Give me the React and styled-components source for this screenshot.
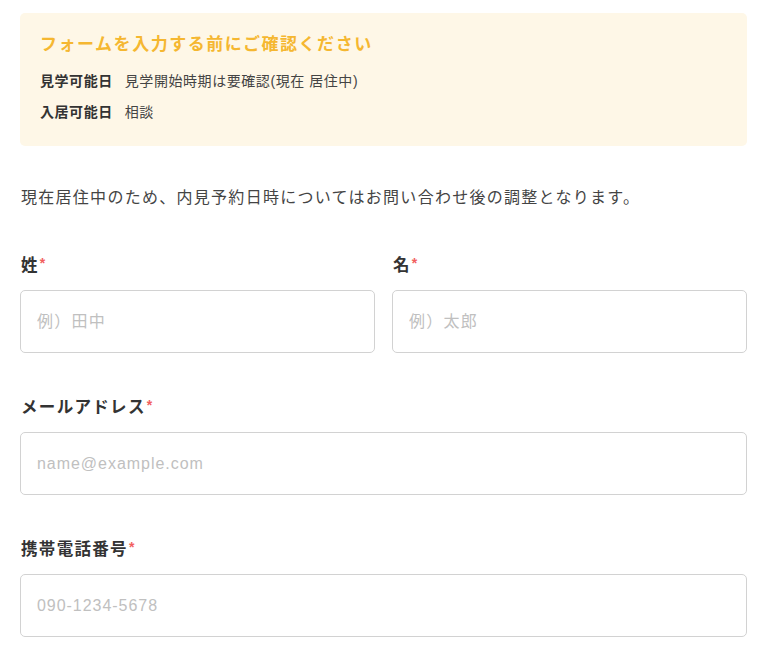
import React from 'react';
import styled, { createGlobalStyle } from 'styled-components';

const GlobalStyle = createGlobalStyle`
  body {
    margin: 0;
    background: #fff;
    font-family: "Liberation Sans", "Noto Sans CJK JP", sans-serif;
    color: #333;
  }
`;

const Page = styled.div`
  width: 727px;
  padding: 13px 0 0 20px;
`;

const Notice = styled.section`
  background: #fef7e7;
  border-radius: 5px;
  padding: 20px 20px 18px;
`;

const NoticeTitle = styled.h2`
  margin: 0 0 9px;
  font-size: 17px;
  line-height: 24px;
  font-weight: 700;
  letter-spacing: 0.09em;
  color: #f5b731;
`;

const NoticeRow = styled.div`
  display: flex;
  gap: 12px;
  font-size: 14px;
  line-height: 31px;
  letter-spacing: 0.04em;
  color: #444;
`;

const NoticeLabel = styled.span`
  font-weight: 700;
  color: #333;
`;

const Lead = styled.p`
  margin: 40px 0 41px 1px;
  font-size: 16px;
  line-height: 24px;
  letter-spacing: 0.08em;
  color: #444;
`;

const Row = styled.div`
  display: grid;
  grid-template-columns: 1fr 1fr;
  gap: 17px;
`;

const Field = styled.div`
  margin-bottom: 40px;
`;

const Label = styled.label`
  display: block;
  margin: 0 0 13px 1px;
  font-size: 16.5px;
  line-height: 24px;
  font-weight: 700;
  letter-spacing: 0.08em;
  color: #333;
`;

const Required = styled.span`
  color: #f25f5f;
  font-size: 14px;
  margin-left: 1px;
  vertical-align: 3px;
`;

const Input = styled.input`
  box-sizing: border-box;
  width: 100%;
  height: 63px;
  padding: 0 16px;
  border: 1.5px solid #d2d2d2;
  border-radius: 5px;
  background: #fff;
  font-family: inherit;
  font-size: 16px;
  letter-spacing: ${p => (p.$latin ? '0.06em' : '0.08em')};
  color: #333;
  outline: none;

  &::placeholder {
    color: #c0c0c0;
  }
`;

function FormField({ label, placeholder, latin }) {
  return (
    <Field>
      <Label>
        {label}
        <Required>*</Required>
      </Label>
      <Input placeholder={placeholder} $latin={latin} />
    </Field>
  );
}

export default function App() {
  return (
    <Page>
      <GlobalStyle />
      <Notice>
        <NoticeTitle>フォームを入力する前にご確認ください</NoticeTitle>
        <NoticeRow>
          <NoticeLabel>見学可能日</NoticeLabel>
          <span>見学開始時期は要確認(現在 居住中)</span>
        </NoticeRow>
        <NoticeRow>
          <NoticeLabel>入居可能日</NoticeLabel>
          <span>相談</span>
        </NoticeRow>
      </Notice>
      <Lead>現在居住中のため、内見予約日時についてはお問い合わせ後の調整となります。</Lead>
      <Row>
        <FormField label="姓" placeholder="例）田中" />
        <FormField label="名" placeholder="例）太郎" />
      </Row>
      <FormField label="メールアドレス" placeholder="name@example.com" latin />
      <FormField label="携帯電話番号" placeholder="090-1234-5678" latin />
    </Page>
  );
}
